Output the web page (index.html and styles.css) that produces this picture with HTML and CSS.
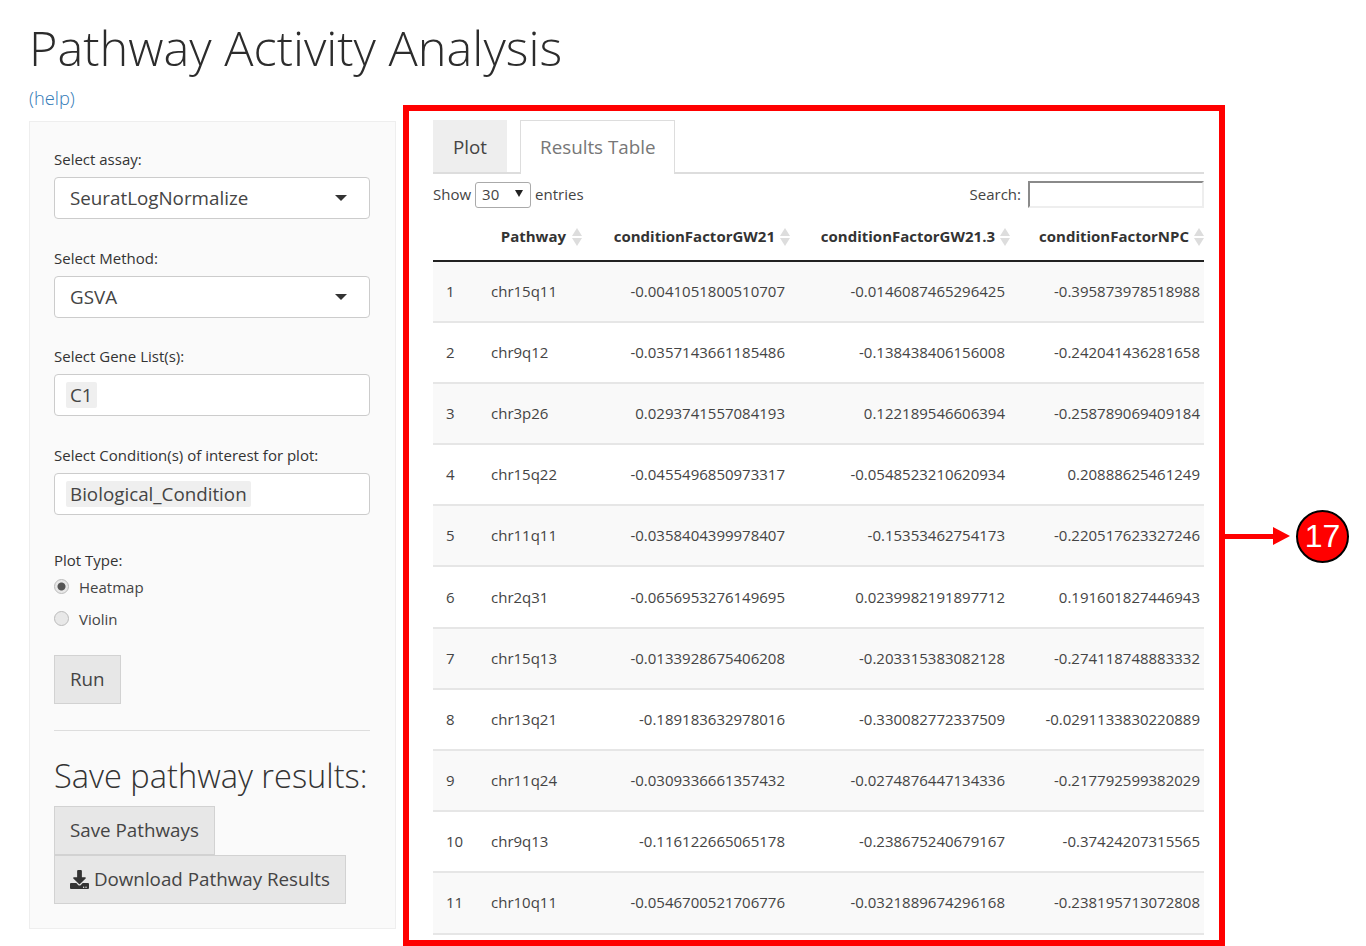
FILE: index.html
```html
<!DOCTYPE html>
<html lang="en">

    <head>
        <meta charset="UTF-8">
        <meta name="viewport" content="width=device-width, initial-scale=1.0">
        <title>Pathway Activity Analysis</title>

        <link rel="stylesheet" href="styles.css">
    </head>

    <body>
        <h1 class="page-title">Pathway Activity Analysis</h1>
        <div class="page-row">
            <div class="left-col">
                <a class="help-link" href="#">(help)</a>
                <div class="well">
                    <div class="form-group">
                        <label class="field-label">Select assay:</label>
                        <div class="select-box">SeuratLogNormalize<span class="caret"></span></div>
                    </div>
                    <div class="form-group">
                        <label class="field-label">Select Method:</label>
                        <div class="select-box">GSVA<span class="caret"></span></div>
                    </div>
                    <div class="form-group">
                        <label class="field-label">Select Gene List(s):</label>
                        <div class="select-box"><span class="chip">C1</span></div>
                    </div>
                    <div class="form-group">
                        <label class="field-label">Select Condition(s) of interest for plot:</label>
                        <div class="select-box"><span class="chip">Biological_Condition</span></div>
                    </div>
                    <div class="radio-group">
                        <label class="field-label">Plot Type:</label>
                        <label class="radio-row"><input type="radio" name="plotType" checked>Heatmap</label>
                        <label class="radio-row"><input type="radio" name="plotType">Violin</label>
                    </div>
                    <button class="btn" type="button">Run</button>
                    <hr class="divider">
                    <h3 class="section-title">Save pathway results:</h3>
                    <button class="btn btn-block" type="button">Save Pathways</button>
                    <button class="btn btn-block" type="button">
                        <svg class="icon-download" viewBox="0 0 512 512"><path d="M216 0h80c13.3 0 24 10.7 24 24v168h87.7c17.8 0 26.7 21.5 14.1 34.1L269.7 378.3c-7.5 7.5-19.8 7.5-27.3 0L90.1 226.1c-12.6-12.6-3.7-34.1 14.1-34.1H192V24c0-13.3 10.7-24 24-24zm296 376v112c0 13.3-10.7 24-24 24H24c-13.3 0-24-10.7-24-24V376c0-13.3 10.7-24 24-24h146.7l49 49c20.1 20.1 52.5 20.1 72.6 0l49-49H488c13.3 0 24 10.7 24 24zm-124 88c0-11-9-20-20-20s-20 9-20 20 9 20 20 20 20-9 20-20zm64 0c0-11-9-20-20-20s-20 9-20 20 9 20 20 20 20-9 20-20z"/></svg>
                        Download Pathway Results
                    </button>
                </div>
            </div>

            <div class="panel">
                <div class="tabs">
                    <a class="tab" href="#">Plot</a>
                    <a class="tab tab-active" href="#">Results Table</a>
                </div>
                <div class="table-controls">
                    <div class="length-control">
                        Show
                        <span class="mini-select">30<span class="mini-caret"></span></span>
                        entries
                    </div>
                    <div class="search-control">
                        Search:
                        <input class="search-input" type="text">
                    </div>
                </div>
                <table class="results">
                    <colgroup>
                        <col class="col-id">
                        <col class="col-name">
                        <col class="col-gw21">
                        <col class="col-gw213">
                        <col class="col-npc">
                    </colgroup>
                    <thead>
                        <tr>
                            <th></th>
                            <th>Pathway<span class="sort"></span></th>
                            <th>conditionFactorGW21<span class="sort"></span></th>
                            <th>conditionFactorGW21.3<span class="sort"></span></th>
                            <th>conditionFactorNPC<span class="sort"></span></th>
                        </tr>
                    </thead>
                    <tbody>
                        <tr><td>1</td><td>chr15q11</td><td>-0.0041051800510707</td><td>-0.0146087465296425</td><td>-0.395873978518988</td></tr>
                        <tr><td>2</td><td>chr9q12</td><td>-0.0357143661185486</td><td>-0.138438406156008</td><td>-0.242041436281658</td></tr>
                        <tr><td>3</td><td>chr3p26</td><td>0.0293741557084193</td><td>0.122189546606394</td><td>-0.258789069409184</td></tr>
                        <tr><td>4</td><td>chr15q22</td><td>-0.0455496850973317</td><td>-0.0548523210620934</td><td>0.20888625461249</td></tr>
                        <tr><td>5</td><td>chr11q11</td><td>-0.0358404399978407</td><td>-0.15353462754173</td><td>-0.220517623327246</td></tr>
                        <tr><td>6</td><td>chr2q31</td><td>-0.0656953276149695</td><td>0.0239982191897712</td><td>0.191601827446943</td></tr>
                        <tr><td>7</td><td>chr15q13</td><td>-0.0133928675406208</td><td>-0.203315383082128</td><td>-0.274118748883332</td></tr>
                        <tr><td>8</td><td>chr13q21</td><td>-0.189183632978016</td><td>-0.330082772337509</td><td>-0.0291133830220889</td></tr>
                        <tr><td>9</td><td>chr11q24</td><td>-0.0309336661357432</td><td>-0.0274876447134336</td><td>-0.217792599382029</td></tr>
                        <tr><td>10</td><td>chr9q13</td><td>-0.116122665065178</td><td>-0.238675240679167</td><td>-0.37424207315565</td></tr>
                        <tr><td>11</td><td>chr10q11</td><td>-0.0546700521706776</td><td>-0.0321889674296168</td><td>-0.238195713072808</td></tr>
                    </tbody>
                </table>
            </div>

            <div class="callout">
                <span class="callout-line"></span>
                <span class="callout-head"></span>
                <span class="callout-badge">17</span>
            </div>
        </div>
    </body>

</html>
```

FILE: styles.css
```css
html,
body {
    height: 946px;
    overflow: hidden;
}

body {
    margin: 0;
    background-color: #fff;
    font-family: "Open Sans", Arial, sans-serif;
    color: #333;
}

a {
    text-decoration: none;
}

.page-title {
    margin: 0;
    padding-left: 29px;
    height: 85px;
    font-size: 48.7px;
    font-weight: 300;
    line-height: 94px;
    color: #2c2c2c;
    white-space: nowrap;
}

.page-row {
    display: flex;
    align-items: flex-start;
}

.left-col {
    width: 367px;
    margin-left: 29px;
    flex-shrink: 0;
}

.help-link {
    display: block;
    height: 36px;
    font-size: 18.3px;
    font-weight: 300;
    line-height: 25px;
    color: #337ab7;
}

.well {
    box-sizing: border-box;
    height: 808px;
    padding: 28px 25px 0 24px;
    background-color: #fafafa;
    border: 1px solid #eee;
}

.form-group {
    margin-bottom: 29.6px;
}

.field-label {
    display: block;
    height: 20px;
    margin-bottom: 7px;
    font-size: 15px;
    line-height: 18px;
}

.select-box {
    box-sizing: border-box;
    display: flex;
    align-items: center;
    justify-content: space-between;
    height: 42px;
    padding: 0 22px 0 15px;
    background-color: #fff;
    border: 1px solid #ccc;
    border-radius: 4px;
    font-size: 18.8px;
    color: #444;
}

.select-box .chip {
    margin-left: -4px;
    padding: 0 4px;
    background-color: #efefef;
    border-radius: 2px;
}

.caret {
    width: 0;
    height: 0;
    border-left: 6px solid transparent;
    border-right: 6px solid transparent;
    border-top: 6px solid #333;
}

.radio-group {
    margin-top: 36px;
    margin-bottom: 26px;
}

.radio-group .field-label {
    margin-bottom: 6px;
}

.radio-row {
    display: flex;
    align-items: center;
    gap: 10px;
    height: 20px;
    margin-bottom: 12px;
    font-size: 15px;
    color: #444;
}

.radio-row input {
    appearance: none;
    box-sizing: border-box;
    width: 15px;
    height: 15px;
    margin: 0;
    background-color: #e8e8e8;
    border: 1px solid #bbb;
    border-radius: 50%;
}

.radio-row input:checked {
    background: radial-gradient(circle, #555 0, #555 3.5px, #e8e8e8 4.5px);
}

.btn {
    box-sizing: border-box;
    display: block;
    height: 49px;
    padding: 0 15px;
    background-color: #e7e7e7;
    border: 1px solid #d2d2d2;
    font-family: inherit;
    font-size: 18.8px;
    color: #444;
    cursor: pointer;
}

.icon-download {
    width: 19px;
    height: 19px;
    vertical-align: -3px;
    fill: #333;
}

.divider {
    margin: 26px 0 26px;
    border: 0;
    border-top: 1px solid #ddd;
}

.section-title {
    margin: 0 0 13px;
    height: 36px;
    font-size: 32.6px;
    font-weight: 300;
    line-height: 38px;
    white-space: nowrap;
}

.panel {
    box-sizing: border-box;
    flex-shrink: 0;
    width: 822px;
    height: 841px;
    margin: 20px 0 0 7px;
    padding: 9px 15px 0 24px;
    border: 6px solid #f00;
    overflow: hidden;
}

.tabs {
    display: flex;
    gap: 13px;
    height: 54px;
    border-bottom: 2px solid #ddd;
    box-sizing: border-box;
}

.tab {
    box-sizing: border-box;
    height: 52px;
    padding: 0 20px;
    background-color: #eee;
    font-size: 18.8px;
    line-height: 54px;
    color: #444;
}

.tab-active {
    height: 54px;
    padding: 0 19px;
    background-color: #fff;
    border: 1px solid #ddd;
    border-bottom: 0;
    line-height: 52px;
    color: #777;
}

.table-controls {
    display: flex;
    align-items: center;
    justify-content: space-between;
    height: 27px;
    margin-top: 6px;
    font-size: 15px;
    color: #444;
}

.length-control {
    display: flex;
    align-items: center;
    gap: 4px;
}

.mini-select {
    box-sizing: border-box;
    display: flex;
    align-items: center;
    justify-content: space-between;
    width: 56px;
    height: 26px;
    margin-top: 2px;
    padding: 0 7px 2px 6px;
    background-color: #fff;
    border: 1px solid #aaa;
    border-radius: 3px;
}

.mini-caret {
    width: 0;
    height: 0;
    border-left: 4px solid transparent;
    border-right: 4px solid transparent;
    border-top: 7px solid #222;
}

.search-control {
    display: flex;
    align-items: center;
    gap: 7px;
}

.search-input {
    box-sizing: border-box;
    width: 176px;
    height: 27px;
    margin: 2px 0 0;
    padding: 0;
    background-color: #fff;
    border: 2px solid;
    border-color: #8a8a8a #eee #eee #8a8a8a;
}

.results {
    width: 771px;
    margin-top: 13.5px;
    table-layout: fixed;
    border-collapse: collapse;
    font-size: 15px;
}

.col-id {
    width: 45px;
}

.col-name {
    width: 110px;
}

.col-gw21 {
    width: 202px;
}

.col-gw213 {
    width: 220px;
}

.results th {
    box-sizing: border-box;
    height: 40px;
    padding: 0 0 9px 0;
    font-size: 15px;
    font-weight: 700;
    text-align: right;
    white-space: nowrap;
    border-bottom: 2px solid #222;
}

.results th:nth-child(2) {
    padding-right: 6px;
}

.sort {
    display: inline-block;
    position: relative;
    width: 10px;
    height: 18px;
    margin-left: 5px;
    vertical-align: -4px;
}

.results th:nth-child(2) .sort {
    margin-left: 6px;
}

.sort::before,
.sort::after {
    content: "";
    position: absolute;
    left: 0;
    border-left: 5px solid transparent;
    border-right: 5px solid transparent;
}

.sort::before {
    top: 0;
    border-bottom: 8px solid #ddd;
}

.sort::after {
    bottom: 0;
    border-top: 8px solid #ddd;
}

.results td {
    box-sizing: border-box;
    height: 61.2px;
    padding: 0 5px 1px 0;
    text-align: right;
    white-space: nowrap;
    border-bottom: 2px solid #e6e6e6;
    color: #444;
}

.results td:nth-child(1),
.results td:nth-child(2) {
    text-align: left;
    padding-left: 13px;
}

.results td:nth-child(5) {
    padding-right: 4px;
}

.results tbody tr:nth-child(odd) {
    background-color: #f9f9f9;
}

.callout {
    display: flex;
    align-items: center;
    flex-shrink: 0;
    margin-top: 424.5px;
}

.callout-line {
    width: 48px;
    height: 5px;
    background-color: #f00;
}

.callout-head {
    width: 0;
    height: 0;
    margin-right: 6px;
    border-left: 17px solid #f00;
    border-top: 9px solid transparent;
    border-bottom: 9px solid transparent;
}

.callout-badge {
    box-sizing: border-box;
    width: 53px;
    height: 53px;
    background-color: #f00;
    border: 2px solid #000;
    border-radius: 50%;
    font-family: "Liberation Sans", Arial, sans-serif;
    font-size: 32px;
    line-height: 49px;
    text-align: center;
    color: #fff;
}
```
